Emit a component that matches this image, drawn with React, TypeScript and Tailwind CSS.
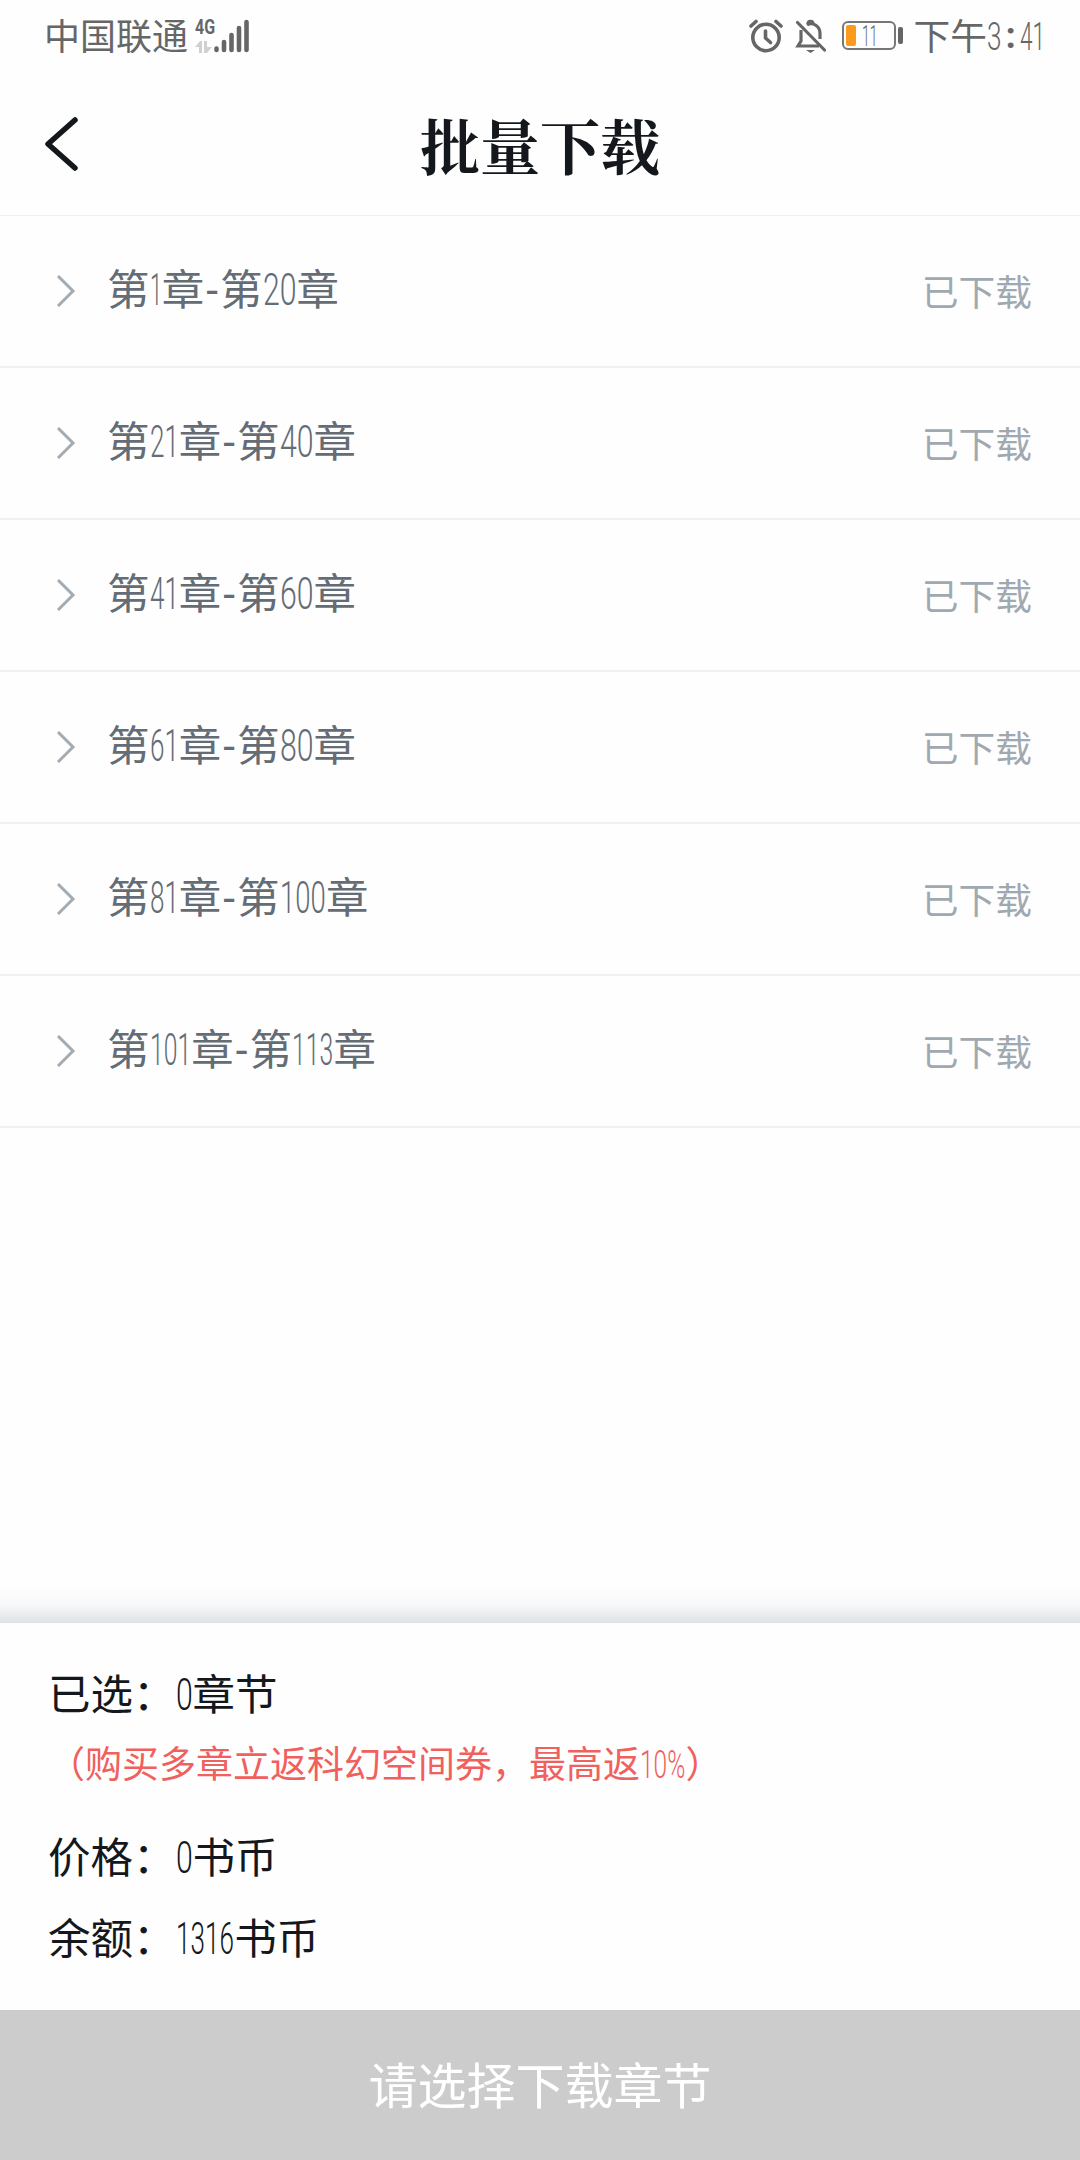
import type { ReactNode } from 'react';

const chapters = [
  { from: 1, to: 20 },
  { from: 21, to: 40 },
  { from: 41, to: 60 },
  { from: 61, to: 80 },
  { from: 81, to: 100 },
  { from: 101, to: 113 },
];

// advance of each glyph in em: [condensed, Roboto]
const glyphWidth = (c: string): [number, number] => {
  if (c === '1') return [0.29, 0.562];
  if (c === '%') return [0.54, 0.732];
  return [0.4, 0.562];
};

// Condensed number that keeps its own width in the text line
function Num({ children }: { children: string }) {
  const width = [...children].reduce((sum, c) => sum + glyphWidth(c)[0], 0);
  const natural = [...children].reduce((sum, c) => sum + glyphWidth(c)[1], 0);

  return (
    <span className="inline-block whitespace-nowrap" style={{ width: `${width}em` }}>
      <span
        className="inline-block origin-left font-['Roboto'] text-[1.06em] font-light"
        style={{ transform: `scaleX(${width / natural / 1.06})` }}
      >
        {children}
      </span>
    </span>
  );
}

function StatusBar() {
  return (
    <div className="flex h-[72px] shrink-0 items-center pl-[44px] pr-[35px] text-[36px] leading-none text-[#666]">
      <span className="pb-[4px]">中国联通</span>
      <div className="ml-[7px] flex h-[34px] w-[20px] flex-col justify-between">
        <span className="origin-left scale-x-[0.8] font-['Roboto'] text-[20px] font-bold leading-[17px]">4G</span>
        <svg className="h-[12px] w-[17px]" viewBox="0 0 17 12" fill="#d0d0d0">
          <path d="M0 6L5 0H7V12H4V6ZM9 0H12V6H17L12 12H9Z" />
        </svg>
      </div>
      <svg className="-ml-[2px] h-[34px] w-[36px]" viewBox="0 0 36 34" stroke="#666" strokeWidth="4.6" strokeLinecap="round">
        <path d="M3.5 29.5V31M11 23V31M18.5 16V31M26 9V31M33.5 3V31" />
      </svg>

      <div className="ml-auto flex items-center">
        <svg className="h-[34px] w-[34px]" viewBox="0 0 34 34" fill="none" stroke="#666" strokeWidth="3.6" strokeLinecap="round" strokeLinejoin="round">
          <circle cx="17" cy="18.5" r="13.2" />
          <path d="M16.5 12V19L21.5 23.5" />
          <path d="M2 7L7 2.5M27 2.5L32 7" />
        </svg>
        <svg className="ml-[12px] h-[34px] w-[32px]" viewBox="0 0 32 34" fill="none" stroke="#666" strokeWidth="3.2">
          <path d="M2.5 3.5L29.5 31" strokeLinecap="round" />
          <path d="M6 11V22L3 27H24M12 6C18 2 25 8 25 14V20" />
          <path d="M13 5C13 1.5 18 1.5 18 5" />
          <path d="M11 31H20L15.5 34Z" fill="#666" stroke="none" />
        </svg>
        <div className="ml-[15px] flex h-[29px] w-[54px] items-center rounded-[6px] border-2 border-[#777] p-[2px]">
          <span className="h-[21px] w-[10px] rounded-[2px] bg-[#fc9a1e]" />
          <span className="ml-[6px] text-[27px] leading-none">
            <Num>11</Num>
          </span>
        </div>
        <span className="ml-[2px] h-[17px] w-[5px] rounded-[2px] bg-[#666]" />
        <span className="ml-[10px] flex items-center text-[36.75px]">
          <span className="pb-[3px]">下午</span>
          <Num>3</Num>
          <span className="w-[18px] text-center font-['Roboto'] font-bold">:</span>
          <Num>41</Num>
        </span>
      </div>
    </div>
  );
}

function Header() {
  return (
    <header className="flex h-[144px] shrink-0 items-center border-b border-[#f0f0f0] px-[44px]">
      <svg className="h-[56px] w-[35px]" viewBox="0 0 35 56" fill="none" stroke="#14181c" strokeWidth="5.5" strokeLinecap="round" strokeLinejoin="round">
        <path d="M31 4L4 28L31 52" />
      </svg>
      <h1 className="flex-1 pr-[35px] text-center font-['Noto_Serif_CJK_SC','Noto_Sans_CJK_SC',serif] text-[60px] font-bold leading-none text-[#14181c]">
        批量下载
      </h1>
    </header>
  );
}

function ChapterRow({ from, to }: { from: number; to: number }) {
  return (
    <li className="flex h-[152px] items-center border-b-2 border-[#f0f0f0] pl-[56px] pr-[48px]">
      <svg className="h-[34px] w-[20px]" viewBox="0 0 20 34" fill="none" stroke="#a3abb3" strokeWidth="3">
        <path d="M2 2L17 17L2 32" />
      </svg>
      <span className="ml-[31px] pb-[3px] text-[42.5px] leading-none text-[#646c75]">
        第<Num>{String(from)}</Num>章
        <span className="inline-block w-[0.37em] text-center font-['Roboto']">-</span>
        第<Num>{String(to)}</Num>章
      </span>
      <span className="ml-auto pb-[2px] text-[36.75px] leading-none text-[#a0a8b0]">已下载</span>
    </li>
  );
}

function SummaryLine({ label, children }: { label: string; children: ReactNode }) {
  return (
    <p className="text-[42.5px] leading-[78px] text-[#14181c]">
      {label}：{children}
    </p>
  );
}

export default function App() {
  return (
    <div className="flex h-[2160px] w-[1080px] flex-col overflow-hidden bg-[#fefefe] font-['Noto_Sans_CJK_SC',sans-serif]">
      <StatusBar />
      <Header />
      <ul>
        {chapters.map((c) => (
          <ChapterRow key={c.from} from={c.from} to={c.to} />
        ))}
      </ul>

      <div className="mt-auto h-[38px] shrink-0 bg-gradient-to-b from-[#fefefe] via-[#f8f9fa] to-[#dfe2e5]" />
      <section className="h-[387px] shrink-0 bg-[#fefefe] pl-[48px] pt-[30px]">
        <SummaryLine label="已选">
          <Num>0</Num>章节
        </SummaryLine>
        <p className="-mt-[2px] text-[37px] leading-[60px] text-[#f0605d]">
          （购买多章立返科幻空间券，最高返<Num>10%</Num>）
        </p>
        <div className="mt-[21px]">
          <SummaryLine label="价格">
            <Num>0</Num>书币
          </SummaryLine>
          <SummaryLine label="余额">
            <Num>1316</Num>书币
          </SummaryLine>
        </div>
      </section>
      <button className="h-[150px] shrink-0 bg-[#ccc] pb-[4px] text-[49px] text-white">请选择下载章节</button>
    </div>
  );
}
